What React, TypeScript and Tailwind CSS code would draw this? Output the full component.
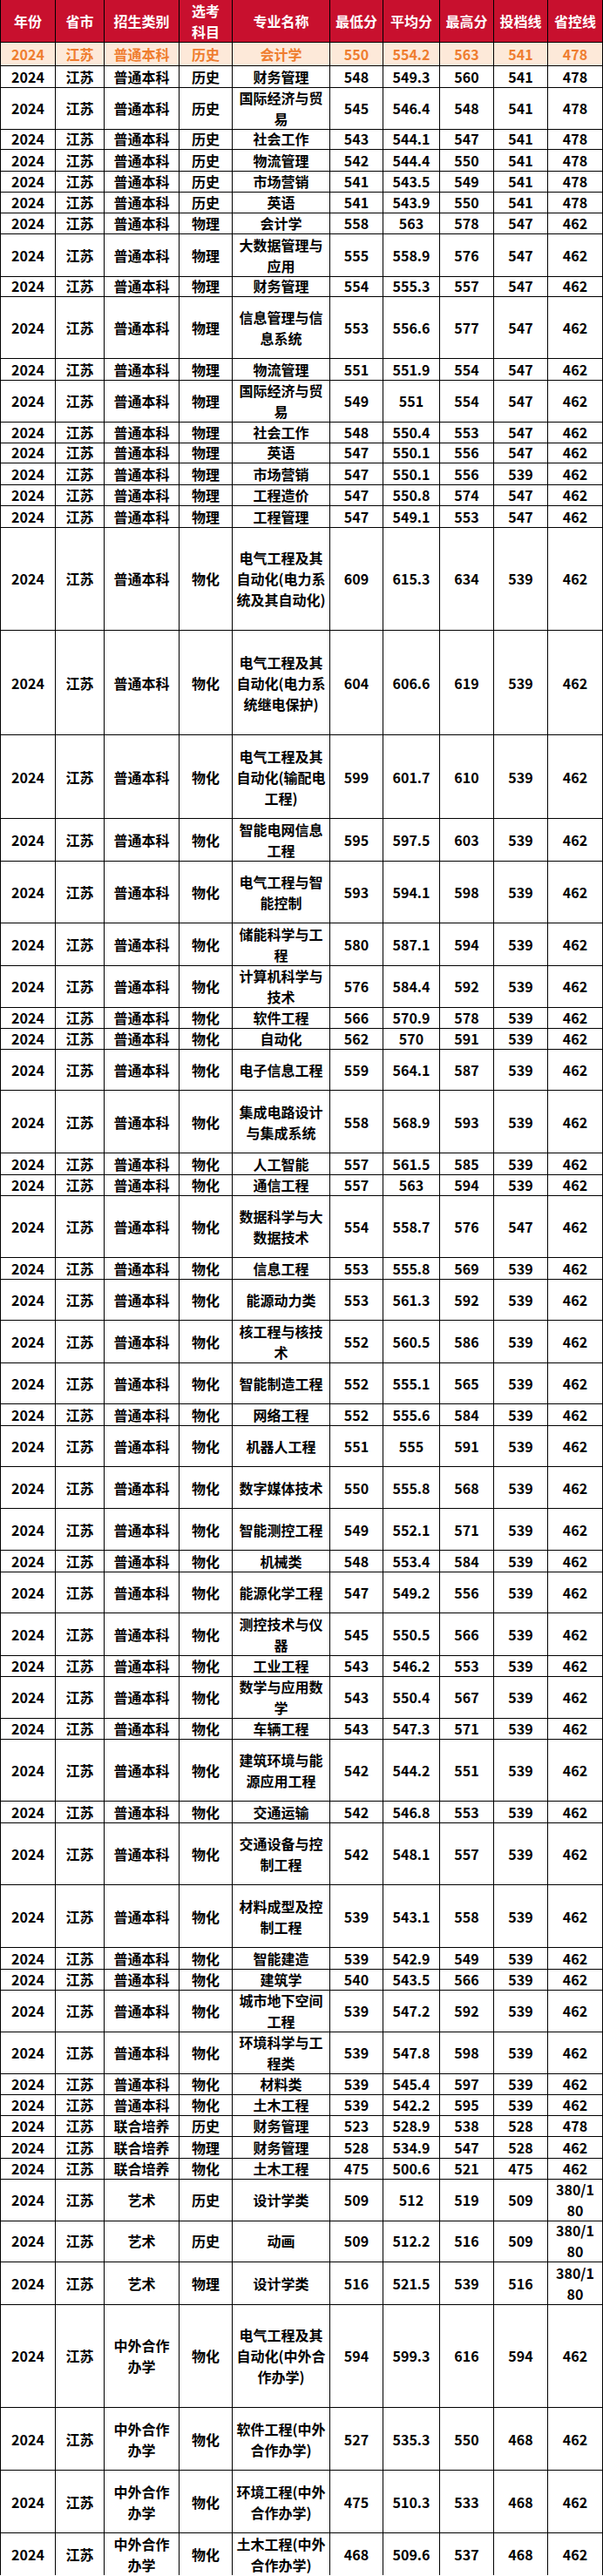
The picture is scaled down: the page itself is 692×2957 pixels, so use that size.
import React from "react";

type Row = {
  cat: string[];
  subj: string;
  major: string[];
  min: string;
  avg: string;
  max: string;
  line: string;
  prov: string[];
  h: number;
  hl?: boolean;
};

const H: Record<number, string> = {
  23: "h-[23px]",
  24: "h-[24px]",
  25: "h-[25px]",
  28: "h-[28px]",
  47: "h-[47px]",
  48: "h-[48px]",
  49: "h-[49px]",
  72: "h-[72px]",
  96: "h-[96px]",
  120: "h-[120px]",
};

const P = ["普通本科"];
const ZW = ["中外合作", "办学"];
const ART = ["380/1", "80"];

function r(
  cat: string[],
  subj: string,
  major: string,
  min: string,
  avg: string,
  max: string,
  line: string,
  prov: string[] | string,
  h: number,
  hl?: boolean
): Row {
  return {
    cat,
    subj,
    major: major.split("|"),
    min,
    avg,
    max,
    line,
    prov: Array.isArray(prov) ? prov : [prov],
    h,
    hl,
  };
}

const rows: Row[] = [
  r(P, "历史", "会计学", "550", "554.2", "563", "541", "478", 28, true),
  r(P, "历史", "财务管理", "548", "549.3", "560", "541", "478", 24),
  r(P, "历史", "国际经济与贸|易", "545", "546.4", "548", "541", "478", 47),
  r(P, "历史", "社会工作", "543", "544.1", "547", "541", "478", 25),
  r(P, "历史", "物流管理", "542", "544.4", "550", "541", "478", 24),
  r(P, "历史", "市场营销", "541", "543.5", "549", "541", "478", 24),
  r(P, "历史", "英语", "541", "543.9", "550", "541", "478", 24),
  r(P, "物理", "会计学", "558", "563", "578", "547", "462", 25),
  r(P, "物理", "大数据管理与|应用", "555", "558.9", "576", "547", "462", 47),
  r(P, "物理", "财务管理", "554", "555.3", "557", "547", "462", 24),
  r(P, "物理", "信息管理与信|息系统", "553", "556.6", "577", "547", "462", 72),
  r(P, "物理", "物流管理", "551", "551.9", "554", "547", "462", 24),
  r(P, "物理", "国际经济与贸|易", "549", "551", "554", "547", "462", 48),
  r(P, "物理", "社会工作", "548", "550.4", "553", "547", "462", 23),
  r(P, "物理", "英语", "547", "550.1", "556", "547", "462", 25),
  r(P, "物理", "市场营销", "547", "550.1", "556", "539", "462", 24),
  r(P, "物理", "工程造价", "547", "550.8", "574", "547", "462", 25),
  r(P, "物理", "工程管理", "547", "549.1", "553", "547", "462", 23),
  r(P, "物化", "电气工程及其|自动化(电力系|统及其自动化)", "609", "615.3", "634", "539", "462", 120),
  r(P, "物化", "电气工程及其|自动化(电力系|统继电保护)", "604", "606.6", "619", "539", "462", 120),
  r(P, "物化", "电气工程及其|自动化(输配电|工程)", "599", "601.7", "610", "539", "462", 96),
  r(P, "物化", "智能电网信息|工程", "595", "597.5", "603", "539", "462", 48),
  r(P, "物化", "电气工程与智|能控制", "593", "594.1", "598", "539", "462", 72),
  r(P, "物化", "储能科学与工|程", "580", "587.1", "594", "539", "462", 48),
  r(P, "物化", "计算机科学与|技术", "576", "584.4", "592", "539", "462", 48),
  r(P, "物化", "软件工程", "566", "570.9", "578", "539", "462", 24),
  r(P, "物化", "自动化", "562", "570", "591", "539", "462", 24),
  r(P, "物化", "电子信息工程", "559", "564.1", "587", "539", "462", 48),
  r(P, "物化", "集成电路设计|与集成系统", "558", "568.9", "593", "539", "462", 72),
  r(P, "物化", "人工智能", "557", "561.5", "585", "539", "462", 24),
  r(P, "物化", "通信工程", "557", "563", "594", "539", "462", 24),
  r(P, "物化", "数据科学与大|数据技术", "554", "558.7", "576", "547", "462", 72),
  r(P, "物化", "信息工程", "553", "555.8", "569", "539", "462", 24),
  r(P, "物化", "能源动力类", "553", "561.3", "592", "539", "462", 48),
  r(P, "物化", "核工程与核技|术", "552", "560.5", "586", "539", "462", 48),
  r(P, "物化", "智能制造工程", "552", "555.1", "565", "539", "462", 48),
  r(P, "物化", "网络工程", "552", "555.6", "584", "539", "462", 25),
  r(P, "物化", "机器人工程", "551", "555", "591", "539", "462", 47),
  r(P, "物化", "数字媒体技术", "550", "555.8", "568", "539", "462", 48),
  r(P, "物化", "智能测控工程", "549", "552.1", "571", "539", "462", 48),
  r(P, "物化", "机械类", "548", "553.4", "584", "539", "462", 24),
  r(P, "物化", "能源化学工程", "547", "549.2", "556", "539", "462", 48),
  r(P, "物化", "测控技术与仪|器", "545", "550.5", "566", "539", "462", 48),
  r(P, "物化", "工业工程", "543", "546.2", "553", "539", "462", 24),
  r(P, "物化", "数学与应用数|学", "543", "550.4", "567", "539", "462", 48),
  r(P, "物化", "车辆工程", "543", "547.3", "571", "539", "462", 24),
  r(P, "物化", "建筑环境与能|源应用工程", "542", "544.2", "551", "539", "462", 72),
  r(P, "物化", "交通运输", "542", "546.8", "553", "539", "462", 24),
  r(P, "物化", "交通设备与控|制工程", "542", "548.1", "557", "539", "462", 72),
  r(P, "物化", "材料成型及控|制工程", "539", "543.1", "558", "539", "462", 72),
  r(P, "物化", "智能建造", "539", "542.9", "549", "539", "462", 24),
  r(P, "物化", "建筑学", "540", "543.5", "566", "539", "462", 24),
  r(P, "物化", "城市地下空间|工程", "539", "547.2", "592", "539", "462", 48),
  r(P, "物化", "环境科学与工|程类", "539", "547.8", "598", "539", "462", 48),
  r(P, "物化", "材料类", "539", "545.4", "597", "539", "462", 24),
  r(P, "物化", "土木工程", "539", "542.2", "595", "539", "462", 24),
  r(["联合培养"], "历史", "财务管理", "523", "528.9", "538", "528", "478", 25),
  r(["联合培养"], "物理", "财务管理", "528", "534.9", "547", "528", "462", 24),
  r(["联合培养"], "物化", "土木工程", "475", "500.6", "521", "475", "462", 24),
  r(["艺术"], "历史", "设计学类", "509", "512", "519", "509", ART, 47),
  r(["艺术"], "历史", "动画", "509", "512.2", "516", "509", ART, 49),
  r(["艺术"], "物理", "设计学类", "516", "521.5", "539", "516", ART, 47),
  r(ZW, "物化", "电气工程及其|自动化(中外合|作办学)", "594", "599.3", "616", "594", "462", 120),
  r(ZW, "物化", "软件工程(中外|合作办学)", "527", "535.3", "550", "468", "462", 72),
  r(ZW, "物化", "环境工程(中外|合作办学)", "475", "510.3", "533", "468", "462", 72),
  r(ZW, "物化", "土木工程(中外|合作办学)", "468", "509.6", "537", "468", "462", 48),
];

const GRID =
  "grid grid-cols-[64px_56px_86px_61px_112px_61px_65px_62px_62px_63px]";

function Cell({
  lines,
  first,
}: {
  lines: string[];
  first?: boolean;
}) {
  return (
    <div
      className={
        "flex flex-col items-center justify-center text-center border-r border-b border-black px-[2px] " +
        (first ? "border-l" : "")
      }
    >
      {lines.map((l, i) => (
        <span key={i} className="block whitespace-nowrap">
          {l}
        </span>
      ))}
    </div>
  );
}

export default function App() {
  const headers = [
    ["年份"],
    ["省市"],
    ["招生类别"],
    ["选考", "科目"],
    ["专业名称"],
    ["最低分"],
    ["平均分"],
    ["最高分"],
    ["投档线"],
    ["省控线"],
  ];
  return (
    <div className="w-[692px] bg-white font-['Noto_Sans_CJK_SC','Noto_Sans',sans-serif] text-[16px] font-bold leading-[24px] text-black">
      <div className={GRID + " h-[48px] bg-[#c8102e] text-white"}>
        {headers.map((h, i) => (
          <Cell key={i} lines={h} first={i === 0} />
        ))}
      </div>
      {rows.map((row, i) => (
        <div
          key={i}
          className={
            GRID +
            " " +
            H[row.h] +
            (row.hl ? " bg-[#fde9d9] text-[#ef7d2f]" : "")
          }
        >
          <Cell lines={["2024"]} first />
          <Cell lines={["江苏"]} />
          <Cell lines={row.cat} />
          <Cell lines={[row.subj]} />
          <Cell lines={row.major} />
          <Cell lines={[row.min]} />
          <Cell lines={[row.avg]} />
          <Cell lines={[row.max]} />
          <Cell lines={[row.line]} />
          <Cell lines={row.prov} />
        </div>
      ))}
    </div>
  );
}
